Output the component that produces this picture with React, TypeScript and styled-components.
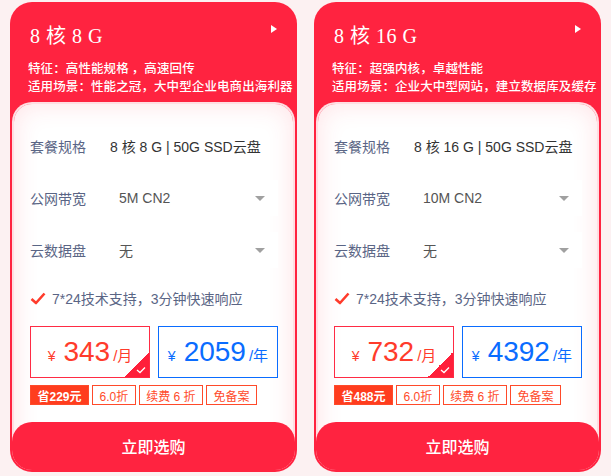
import React from 'react';
import styled, { createGlobalStyle } from 'styled-components';

const GlobalStyle = createGlobalStyle`
  body {
    margin: 0;
    background: #fcf1f2;
    font-family: "Liberation Sans", "Noto Sans CJK SC", sans-serif;
  }
`;

const RED = '#ff2340';
const PRICE_RED = '#ff3b2b';
const BLUE = '#0a6cff';

const Page = styled.div`
  display: flex;
  gap: 17px;
  padding: 2px 10px 0;
  width: 611px;
  height: 476px;
  box-sizing: border-box;
`;

const Card = styled.div`
  width: 287px;
  height: 470px;
  box-sizing: border-box;
  background: ${RED};
  border-radius: 22px;
  display: flex;
  flex-direction: column;
  padding: 0 2px 2px;
`;

const Header = styled.div`
  padding: 18px 18px 0 16px;
  height: 100px;
  box-sizing: border-box;
  color: #fff;
`;

const TitleRow = styled.div`
  display: flex;
  align-items: center;
  justify-content: space-between;
  height: 28px;
  padding-left: 2px;
`;

const Title = styled.h2`
  margin: 0;
  font-family: "Liberation Serif", "Noto Sans CJK SC", serif;
  font-weight: normal;
  font-size: 20px;
  letter-spacing: 0.5px;
`;

const Arrow = styled.span`
  width: 0;
  height: 0;
  border-top: 4.5px solid transparent;
  border-bottom: 4.5px solid transparent;
  border-left: 6px solid #fff;
  margin-top: -10px;
`;

const Features = styled.div`
  margin-top: 11px;
  font-family: "Noto Sans CJK SC", sans-serif;
  font-size: 12.5px;
  letter-spacing: 0.1px;
  line-height: 18px;
  font-weight: 500;
  white-space: nowrap;
`;

const Body = styled.div`
  flex: 1;
  background: #fff;
  border: 2px solid rgba(255, 255, 255, 0.85);
  border-bottom: none;
  border-radius: 20px;
  box-shadow: inset 0 0 26px rgba(255, 60, 80, 0.14);
  display: flex;
  flex-direction: column;
  padding: 24px 0 0;
  box-sizing: border-box;
  background-clip: padding-box;
`;

const Content = styled.div`
  padding: 0 15px 0 16px;
  display: flex;
  flex-direction: column;
`;

const Row = styled.div`
  display: flex;
  align-items: center;
  height: 36px;
  margin-bottom: 16px;
  font-size: 14px;
`;

const Label = styled.span`
  width: 80px;
  color: #5a6585;
  font-family: "Noto Sans CJK SC", sans-serif;
`;

const Value = styled.span`
  color: #333;
`;

const Select = styled.div`
  flex: 1;
  height: 36px;
  background: #fff;
  display: flex;
  align-items: center;
  justify-content: space-between;
  padding: 0 13px 0 9px;
  color: #555;
  font-size: 14px;
  box-sizing: border-box;
`;

const Caret = styled.span`
  width: 0;
  height: 0;
  border-left: 5px solid transparent;
  border-right: 5px solid transparent;
  border-top: 5px solid #a0a0a0;
`;

const Support = styled.div`
  display: flex;
  align-items: center;
  gap: 6px;
  margin-top: 4px;
  height: 20px;
  color: #5a6585;
  font-size: 14px;
`;

const Prices = styled.div`
  display: flex;
  gap: 8px;
  margin-top: 18px;
`;

const PriceBox = styled.div<{ $color: string; $border?: string }>`
  position: relative;
  width: 120px;
  height: 52px;
  box-sizing: border-box;
  border: 1px solid ${(p) => p.$border ?? p.$color};
  color: ${(p) => p.$color};
  display: flex;
  align-items: baseline;
  justify-content: center;
  padding-top: 9px;
  overflow: hidden;
`;

const Yen = styled.span`
  font-size: 14px;
  margin-right: 8px;
`;

const Amount = styled.span`
  font-size: 28px;
  line-height: 32px;
`;

const Unit = styled.span`
  font-size: 15px;
  margin-left: 3px;
`;

const Corner = styled.span`
  position: absolute;
  right: 0;
  bottom: 0;
  width: 25px;
  height: 25px;
  background: linear-gradient(135deg, transparent 50%, #ff1f3a 50%);
`;

const CornerCheck = styled.svg`
  position: absolute;
  right: 3px;
  bottom: 3px;
`;

const Tags = styled.div`
  display: flex;
  gap: 3px;
  margin-top: 7px;
`;

const Tag = styled.span<{ $filled?: boolean }>`
  height: 20px;
  box-sizing: border-box;
  padding: 0 6.5px;
  display: flex;
  align-items: center;
  font-size: 12px;
  border: 1px solid #ff4a2a;
  color: ${(p) => (p.$filled ? '#fff' : '#ff4a2a')};
  background: ${(p) => (p.$filled ? '#ff3d1e' : '#fff')};
  font-weight: ${(p) => (p.$filled ? 600 : 400)};
`;

const BuyButton = styled.button`
  margin-top: auto;
  height: 48px;
  border: none;
  border-radius: 20px;
  background: ${RED};
  color: #fff;
  font-family: "Noto Sans CJK SC", sans-serif;
  font-size: 16px;
  font-weight: 500;
  cursor: pointer;
  margin-left: -2px;
  margin-right: -2px;
`;

type Plan = {
  title: string;
  feature: string;
  scene: string;
  spec: string;
  bandwidth: string;
  month: string;
  year: string;
  save: string;
};

const plans: Plan[] = [
  {
    title: '8 核 8 G',
    feature: '高性能规格 ，高速回传',
    scene: '性能之冠，大中型企业电商出海利器',
    spec: '8 核 8 G | 50G SSD云盘',
    bandwidth: '5M CN2',
    month: '343',
    year: '2059',
    save: '省229元',
  },
  {
    title: '8 核 16 G',
    feature: '超强内核，卓越性能',
    scene: '企业大中型网站，建立数据库及缓存',
    spec: '8 核 16 G | 50G SSD云盘',
    bandwidth: '10M CN2',
    month: '732',
    year: '4392',
    save: '省488元',
  },
];

function CheckMark() {
  return (
    <svg width="16" height="13" viewBox="0 0 16 13">
      <path d="M1.5 7 L6 11 L14.5 1.5" fill="none" stroke={PRICE_RED} strokeWidth="2.6" strokeLinejoin="round" />
    </svg>
  );
}

function PlanCard({ plan }: { plan: Plan }) {
  return (
    <Card>
      <Header>
        <TitleRow>
          <Title>{plan.title}</Title>
          <Arrow />
        </TitleRow>
        <Features>
          <div>特征：{plan.feature}</div>
          <div>适用场景：{plan.scene}</div>
        </Features>
      </Header>
      <Body>
        <Content>
          <Row>
            <Label>套餐规格</Label>
            <Value>{plan.spec}</Value>
          </Row>
          <Row>
            <Label>公网带宽</Label>
            <Select>
              {plan.bandwidth}
              <Caret />
            </Select>
          </Row>
          <Row>
            <Label>云数据盘</Label>
            <Select>
              无
              <Caret />
            </Select>
          </Row>
          <Support>
            <CheckMark />
            7*24技术支持，3分钟快速响应
          </Support>
          <Prices>
            <PriceBox $color={PRICE_RED} $border="#ff2b44">
              <Yen>¥</Yen>
              <Amount>{plan.month}</Amount>
              <Unit>/月</Unit>
              <Corner />
              <CornerCheck width="10" height="8" viewBox="0 0 10 8">
                <path d="M1 4 L4 6.5 L9 1.5" fill="none" stroke="#fff" strokeWidth="1.3" />
              </CornerCheck>
            </PriceBox>
            <PriceBox $color={BLUE}>
              <Yen>¥</Yen>
              <Amount>{plan.year}</Amount>
              <Unit>/年</Unit>
            </PriceBox>
          </Prices>
          <Tags>
            <Tag $filled>{plan.save}</Tag>
            <Tag>6.0折</Tag>
            <Tag>续费 6 折</Tag>
            <Tag>免备案</Tag>
          </Tags>
        </Content>
        <BuyButton>立即选购</BuyButton>
      </Body>
    </Card>
  );
}

export default function App() {
  return (
    <>
      <GlobalStyle />
      <Page>
        {plans.map((p) => (
          <PlanCard key={p.title} plan={p} />
        ))}
      </Page>
    </>
  );
}
